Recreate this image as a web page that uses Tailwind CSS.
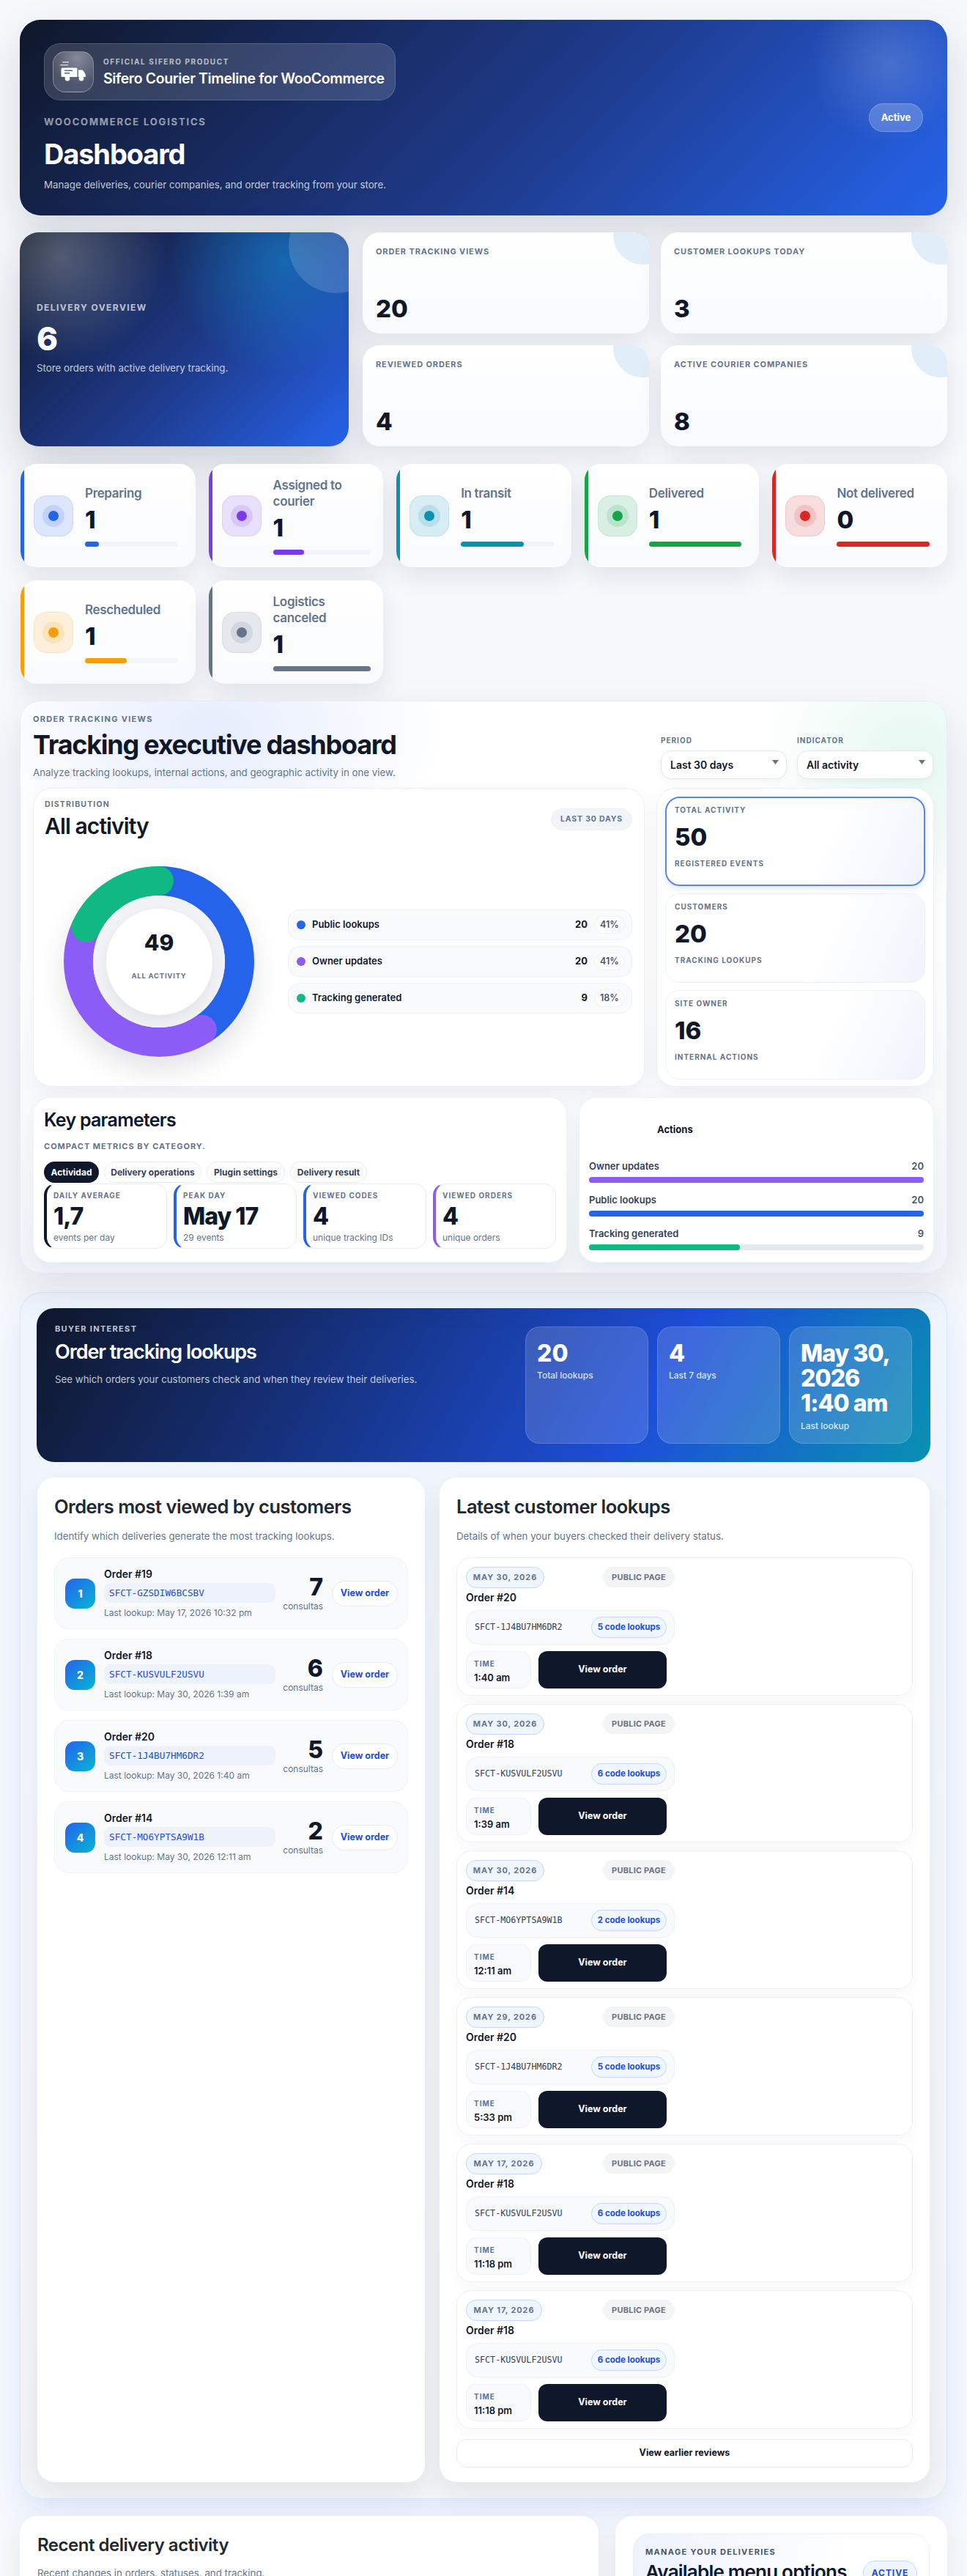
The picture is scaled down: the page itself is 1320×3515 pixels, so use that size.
<!DOCTYPE html>
<html lang="en">
<head>
<meta charset="UTF-8">
<meta name="viewport" content="width=device-width, initial-scale=1.0">
<title>Sifero Courier Timeline - Dashboard</title>
<script src="https://cdn.jsdelivr.net/npm/@tailwindcss/browser@4"></script>
</head>
<body class="h-[3515px] overflow-hidden bg-[#f6f8fc] font-['Inter',sans-serif] text-[#0f172a]">
<div class="px-[27px] pt-[27px]">

  <!-- hero -->
  <header class="relative flex h-[267px] items-center justify-between overflow-hidden rounded-[28px] bg-[linear-gradient(135deg,#0f172a_0%,#1e3a8a_55%,#2563eb_100%)] px-[33px] shadow-[0_24px_60px_rgba(15,23,42,0.14)]">
    <div class="absolute -right-[30px] -top-[50px] h-[220px] w-[220px] rounded-full bg-[radial-gradient(circle,rgba(255,255,255,0.17),rgba(255,255,255,0)_70%)]"></div>
    <div class="relative">
      <div class="flex h-[78px] w-[480px] items-center gap-[13px] rounded-[22px] border border-white/15 bg-white/15 pl-[11px]">
        <div class="flex h-[56px] w-[56px] items-center justify-center rounded-[17px] border border-white/30 bg-[radial-gradient(circle_at_60%_15%,rgba(255,255,255,0.4),rgba(255,255,255,0.12)_65%)]">
          <svg width="36" height="28" viewBox="0 0 36 28" fill="#fff"><rect x="3" y="0" width="9" height="1.6" rx=".8" opacity=".7"/><rect x="0" y="4" width="11" height="1.6" rx=".8" opacity=".7"/><path d="M3 8.5h19a1.5 1.5 0 0 1 1.500 1.500V21H3a1.500 1.500 0 0 1-1.500-1.500V10A1.500 1.500 0 0 1 3 8.500zm22 3h4.500c1 0 1.800.5 2.300 1.300l2.700 4.200c.3.400.5 1 .5 1.500V20a1 1 0 0 1-1 1H25z"/><rect x="6" y="11.500" width="11" height="1.600" fill="#5a6788"/><rect x="6" y="15" width="7" height="1.600" fill="#5a6788"/><circle cx="10" cy="23" r="3.400"/><circle cx="29" cy="23" r="3.400"/></svg>
        </div>
        <div>
          <p class="text-[10px] font-bold uppercase leading-[14px] tracking-[0.16em] text-white/65">Official Sifero product</p>
          <p class="mt-[3px] text-[19.500px] font-semibold leading-[26px] tracking-[-0.02em] text-white">Sifero Courier Timeline for WooCommerce</p>
        </div>
      </div>
      <p class="mt-[21px] text-[13px] font-bold uppercase leading-[16px] tracking-[0.14em] text-white/55">WooCommerce logistics</p>
      <h1 class="mt-[13px] text-[38px] font-bold leading-[46px] tracking-[-0.03em] text-white">Dashboard</h1>
      <p class="mt-[9px] text-[13.300px] leading-[20px] text-white/75">Manage deliveries, courier companies, and order tracking from your store.</p>
    </div>
    <span class="relative flex h-[39px] w-[74px] items-center justify-center rounded-[20px] border border-white/20 bg-white/20 text-[13px] font-bold text-white">Active</span>
  </header>

  <!-- overview -->
  <section class="mt-[23px] flex h-[292px] gap-[19px]">
    <div class="relative flex w-[449px] flex-col justify-center overflow-hidden rounded-[26px] bg-[linear-gradient(135deg,#0f172a_0%,#1e3a8a_55%,#2563eb_100%)] px-[23px] pb-[2px] shadow-[0_24px_60px_rgba(15,23,42,0.18)]">
      <div class="absolute -left-[93px] -top-[117px] h-[300px] w-[300px] rounded-full bg-[radial-gradient(circle,rgba(255,255,255,0.27),rgba(255,255,255,0)_68%)]"></div>
      <div class="absolute -right-[70px] -top-[122px] h-[320px] w-[320px] rounded-full bg-[radial-gradient(circle,rgba(14,165,233,0.42),rgba(14,165,233,0)_68%)]"></div>
      <div class="absolute -right-[48px] -top-[47px] h-[130px] w-[130px] rounded-full bg-white/15"></div>
      <p class="relative text-[12px] font-bold uppercase leading-[16px] tracking-[0.12em] text-white/70">Delivery overview</p>
      <p class="relative mt-[8px] text-[44px] font-extrabold leading-[52px] text-white">6</p>
      <p class="relative mt-[4px] text-[13.300px] leading-[20px] text-white/75">Store orders with active delivery tracking.</p>
    </div>
    <div class="grid flex-1 grid-cols-2 gap-x-4 gap-y-4">
      <div class="relative overflow-hidden rounded-[24px] bg-[linear-gradient(180deg,#ffffff,#f8fafd)] p-[18px] shadow-[0_14px_34px_rgba(15,23,42,0.09)]">
        <div class="absolute -right-[31px] -top-[36px] h-20 w-20 rounded-full bg-[#e2edfa]"></div>
        <p class="text-[11px] font-bold uppercase leading-[16px] tracking-[0.08em] text-[#64748b]">Order tracking views</p>
        <p class="mt-[50px] text-[33px] font-extrabold leading-[40px]">20</p>
      </div>
      <div class="relative overflow-hidden rounded-[24px] bg-[linear-gradient(180deg,#ffffff,#f8fafd)] p-[18px] shadow-[0_14px_34px_rgba(15,23,42,0.09)]">
        <div class="absolute -right-[31px] -top-[36px] h-20 w-20 rounded-full bg-[#e2edfa]"></div>
        <p class="text-[11px] font-bold uppercase leading-[16px] tracking-[0.08em] text-[#64748b]">Customer lookups today</p>
        <p class="mt-[50px] text-[33px] font-extrabold leading-[40px]">3</p>
      </div>
      <div class="relative overflow-hidden rounded-[24px] bg-[linear-gradient(180deg,#ffffff,#f8fafd)] p-[18px] shadow-[0_14px_34px_rgba(15,23,42,0.09)]">
        <div class="absolute -right-[31px] -top-[36px] h-20 w-20 rounded-full bg-[#e2edfa]"></div>
        <p class="text-[11px] font-bold uppercase leading-[16px] tracking-[0.08em] text-[#64748b]">Reviewed orders</p>
        <p class="mt-[50px] text-[33px] font-extrabold leading-[40px]">4</p>
      </div>
      <div class="relative overflow-hidden rounded-[24px] bg-[linear-gradient(180deg,#ffffff,#f8fafd)] p-[18px] shadow-[0_14px_34px_rgba(15,23,42,0.09)]">
        <div class="absolute -right-[31px] -top-[36px] h-20 w-20 rounded-full bg-[#e2edfa]"></div>
        <p class="text-[11px] font-bold uppercase leading-[16px] tracking-[0.08em] text-[#64748b]">Active courier companies</p>
        <p class="mt-[50px] text-[33px] font-extrabold leading-[40px]">8</p>
      </div>
    </div>
  </section>

  <!-- statuses -->
  <section class="mt-[24px] grid grid-cols-5 auto-rows-[141px] gap-x-[18px] gap-y-[18px] pl-px">
    <div class="relative flex items-center gap-4 overflow-hidden rounded-[22px] bg-[linear-gradient(180deg,#fff,#fafbfe)] pl-[18px] pr-[24px] shadow-[0_14px_34px_rgba(15,23,42,0.09)]">
      <span class="absolute inset-y-0 left-0 w-[5px] bg-[#2563eb]"></span>
      <div class="flex h-[56px] w-[54px] shrink-0 items-center justify-center rounded-[17px] border border-[#2563eb]/10 bg-[#2563eb]/15"><div class="flex h-[30px] w-[30px] items-center justify-center rounded-full bg-[#2563eb]/15"><div class="h-[14px] w-[14px] rounded-full bg-[#2563eb]"></div></div></div>
      <div class="min-w-0 flex-1"><p class="text-[17px] font-semibold leading-[22px] tracking-[-0.02em] text-[#64748b]">Preparing</p><p class="mt-[6px] text-[33px] font-extrabold leading-[38px]">1</p><div class="mt-[11px] h-[7px] rounded-full bg-[#f1f5f9]"><div class="h-full w-[15%] rounded-full bg-[#2563eb]"></div></div></div>
    </div>
    <div class="relative flex items-center gap-4 overflow-hidden rounded-[22px] bg-[linear-gradient(180deg,#fff,#fafbfe)] pl-[18px] pr-[17px] shadow-[0_14px_34px_rgba(15,23,42,0.09)]">
      <span class="absolute inset-y-0 left-0 w-[5px] bg-[#7c3aed]"></span>
      <div class="flex h-[56px] w-[54px] shrink-0 items-center justify-center rounded-[17px] border border-[#7c3aed]/10 bg-[#7c3aed]/15"><div class="flex h-[30px] w-[30px] items-center justify-center rounded-full bg-[#7c3aed]/15"><div class="h-[14px] w-[14px] rounded-full bg-[#7c3aed]"></div></div></div>
      <div class="min-w-0 flex-1"><p class="text-[17px] font-semibold leading-[22px] tracking-[-0.02em] text-[#64748b]">Assigned to courier</p><p class="mt-[6px] text-[33px] font-extrabold leading-[38px]">1</p><div class="mt-[11px] h-[7px] rounded-full bg-[#f1f5f9]"><div class="h-full w-[32%] rounded-full bg-[#7c3aed]"></div></div></div>
    </div>
    <div class="relative flex items-center gap-4 overflow-hidden rounded-[22px] bg-[linear-gradient(180deg,#fff,#fafbfe)] pl-[18px] pr-[24px] shadow-[0_14px_34px_rgba(15,23,42,0.09)]">
      <span class="absolute inset-y-0 left-0 w-[5px] bg-[#0891b2]"></span>
      <div class="flex h-[56px] w-[54px] shrink-0 items-center justify-center rounded-[17px] border border-[#0891b2]/10 bg-[#0891b2]/15"><div class="flex h-[30px] w-[30px] items-center justify-center rounded-full bg-[#0891b2]/15"><div class="h-[14px] w-[14px] rounded-full bg-[#0891b2]"></div></div></div>
      <div class="min-w-0 flex-1"><p class="text-[17px] font-semibold leading-[22px] tracking-[-0.02em] text-[#64748b]">In transit</p><p class="mt-[6px] text-[33px] font-extrabold leading-[38px]">1</p><div class="mt-[11px] h-[7px] rounded-full bg-[#f1f5f9]"><div class="h-full w-[68%] rounded-full bg-[#0891b2]"></div></div></div>
    </div>
    <div class="relative flex items-center gap-4 overflow-hidden rounded-[22px] bg-[linear-gradient(180deg,#fff,#fafbfe)] pl-[18px] pr-[24px] shadow-[0_14px_34px_rgba(15,23,42,0.09)]">
      <span class="absolute inset-y-0 left-0 w-[5px] bg-[#16a34a]"></span>
      <div class="flex h-[56px] w-[54px] shrink-0 items-center justify-center rounded-[17px] border border-[#16a34a]/10 bg-[#16a34a]/15"><div class="flex h-[30px] w-[30px] items-center justify-center rounded-full bg-[#16a34a]/15"><div class="h-[14px] w-[14px] rounded-full bg-[#16a34a]"></div></div></div>
      <div class="min-w-0 flex-1"><p class="text-[17px] font-semibold leading-[22px] tracking-[-0.02em] text-[#64748b]">Delivered</p><p class="mt-[6px] text-[33px] font-extrabold leading-[38px]">1</p><div class="mt-[11px] h-[7px] rounded-full bg-[#16a34a]"></div></div>
    </div>
    <div class="relative flex items-center gap-4 overflow-hidden rounded-[22px] bg-[linear-gradient(180deg,#fff,#fafbfe)] pl-[18px] pr-[24px] shadow-[0_14px_34px_rgba(15,23,42,0.09)]">
      <span class="absolute inset-y-0 left-0 w-[5px] bg-[#dc2626]"></span>
      <div class="flex h-[56px] w-[54px] shrink-0 items-center justify-center rounded-[17px] border border-[#dc2626]/10 bg-[#dc2626]/15"><div class="flex h-[30px] w-[30px] items-center justify-center rounded-full bg-[#dc2626]/15"><div class="h-[14px] w-[14px] rounded-full bg-[#dc2626]"></div></div></div>
      <div class="min-w-0 flex-1"><p class="text-[17px] font-semibold leading-[22px] tracking-[-0.02em] text-[#64748b]">Not delivered</p><p class="mt-[6px] text-[33px] font-extrabold leading-[38px]">0</p><div class="mt-[11px] h-[7px] rounded-full bg-[#dc2626]"></div></div>
    </div>
    <div class="relative flex items-center gap-4 overflow-hidden rounded-[22px] bg-[linear-gradient(180deg,#fff,#fafbfe)] pl-[18px] pr-[24px] shadow-[0_14px_34px_rgba(15,23,42,0.09)]">
      <span class="absolute inset-y-0 left-0 w-[5px] bg-[#f59e0b]"></span>
      <div class="flex h-[56px] w-[54px] shrink-0 items-center justify-center rounded-[17px] border border-[#f59e0b]/10 bg-[#f59e0b]/15"><div class="flex h-[30px] w-[30px] items-center justify-center rounded-full bg-[#f59e0b]/15"><div class="h-[14px] w-[14px] rounded-full bg-[#f59e0b]"></div></div></div>
      <div class="min-w-0 flex-1"><p class="text-[17px] font-semibold leading-[22px] tracking-[-0.02em] text-[#64748b]">Rescheduled</p><p class="mt-[6px] text-[33px] font-extrabold leading-[38px]">1</p><div class="mt-[11px] h-[7px] rounded-full bg-[#f1f5f9]"><div class="h-full w-[45%] rounded-full bg-[#f59e0b]"></div></div></div>
    </div>
    <div class="relative flex items-center gap-4 overflow-hidden rounded-[22px] bg-[linear-gradient(180deg,#fff,#fafbfe)] pl-[18px] pr-[17px] shadow-[0_14px_34px_rgba(15,23,42,0.09)]">
      <span class="absolute inset-y-0 left-0 w-[5px] bg-[#64748b]"></span>
      <div class="flex h-[56px] w-[54px] shrink-0 items-center justify-center rounded-[17px] border border-[#64748b]/10 bg-[#64748b]/15"><div class="flex h-[30px] w-[30px] items-center justify-center rounded-full bg-[#64748b]/15"><div class="h-[14px] w-[14px] rounded-full bg-[#64748b]"></div></div></div>
      <div class="min-w-0 flex-1"><p class="text-[17px] font-semibold leading-[22px] tracking-[-0.02em] text-[#64748b]">Logistics canceled</p><p class="mt-[6px] text-[33px] font-extrabold leading-[38px]">1</p><div class="mt-[11px] h-[7px] rounded-full bg-[#64748b]"></div></div>
    </div>
  </section>

  <!-- tracking executive dashboard -->
  <section class="relative mt-[23px] h-[781px] overflow-hidden rounded-[28px] border border-[#e6ecf5] bg-[linear-gradient(180deg,#ffffff_0%,#ffffff_45%,#f1f4f9_100%)] px-[17px] shadow-[0_24px_60px_rgba(15,23,42,0.10)]">
    <div class="absolute -left-[60px] -top-[160px] h-[400px] w-[640px] rounded-full bg-[radial-gradient(closest-side,rgba(59,110,235,0.13),rgba(59,110,235,0))]"></div>
    <div class="absolute -right-[160px] -top-[120px] h-[400px] w-[420px] rounded-full bg-[radial-gradient(closest-side,rgba(16,185,129,0.11),rgba(16,185,129,0))]"></div>
    <div class="relative flex h-[118px] justify-between">
      <div class="pt-[16px]">
        <p class="text-[11px] font-bold uppercase leading-[16px] tracking-[0.12em] text-[#64748b]">Order tracking views</p>
        <h2 class="mt-[5px] text-[36px] font-bold leading-[44px] tracking-[-0.035em]">Tracking executive dashboard</h2>
        <p class="mt-[5px] text-[13.300px] leading-[22px] text-[#64748b]">Analyze tracking lookups, internal actions, and geographic activity in one view.</p>
      </div>
      <div class="mr-px flex gap-[14px] pt-[46px]">
        <div class="w-[172px]">
          <p class="text-[10px] font-bold uppercase leading-[14px] tracking-[0.1em] text-[#64748b]">Period</p>
          <div class="mt-[7px] flex h-[39px] items-start justify-between rounded-[14px] border border-[#e2e8f0] bg-white pl-[12px] pr-[10px] pt-[9px] text-[14px] font-semibold leading-[20px] shadow-[0_4px_10px_rgba(15,23,42,0.04)]">Last 30 days<svg class="mt-[3px]" width="9" height="6" viewBox="0 0 9 6" fill="#64748b"><path d="M0 0h9L4.500 6z"/></svg></div>
        </div>
        <div class="w-[186px]">
          <p class="text-[10px] font-bold uppercase leading-[14px] tracking-[0.1em] text-[#64748b]">Indicator</p>
          <div class="mt-[7px] flex h-[39px] items-start justify-between rounded-[14px] border border-[#e2e8f0] bg-white pl-[12px] pr-[10px] pt-[9px] text-[14px] font-semibold leading-[20px] shadow-[0_4px_10px_rgba(15,23,42,0.04)]">All activity<svg class="mt-[3px]" width="9" height="6" viewBox="0 0 9 6" fill="#64748b"><path d="M0 0h9L4.500 6z"/></svg></div>
        </div>
      </div>
    </div>

    <div class="relative grid grid-cols-[835px_1fr] gap-4">
      <div class="relative h-[408px] rounded-[26px] border border-[#edf1f7] bg-white px-[15px] shadow-[0_12px_30px_rgba(15,23,42,0.05)]">
        <div class="flex items-start justify-between pr-[1px]">
          <div class="pt-[14px]">
            <p class="text-[10.500px] font-bold uppercase leading-[16px] tracking-[0.11em] text-[#64748b]">Distribution</p>
            <h3 class="mt-[2px] text-[30px] font-semibold leading-[38px] tracking-[-0.03em]">All activity</h3>
          </div>
          <span class="mt-[27px] flex h-[30px] w-[111px] items-center justify-center rounded-full border border-[#eef2f7] bg-[#f1f5f9] text-[10.500px] font-bold uppercase tracking-[0.08em] text-[#64748b]">Last 30 days</span>
        </div>
        <div class="mt-[36px] flex items-center">
          <div class="relative ml-[26px] h-[260px] w-[260px] shrink-0 rounded-full shadow-[0_18px_36px_rgba(15,23,42,0.12)]">
            <svg class="h-full w-full -rotate-90" viewBox="0 0 260 260" fill="none">
              <circle cx="130" cy="130" r="110" stroke="#2563eb" stroke-width="40" stroke-linecap="round" pathLength="100" stroke-dasharray="41 59"/>
              <circle cx="130" cy="130" r="110" stroke="#8b5cf6" stroke-width="40" stroke-linecap="round" pathLength="100" stroke-dasharray="41 59" stroke-dashoffset="-41"/>
              <circle cx="130" cy="130" r="110" stroke="#10b981" stroke-width="40" stroke-linecap="round" pathLength="100" stroke-dasharray="18 82" stroke-dashoffset="-82"/>
            </svg>
            <div class="absolute left-[40px] top-[40px] flex h-[180px] w-[180px] items-center justify-center rounded-full bg-[#f1f2f5]">
              <div class="flex h-[145px] w-[145px] flex-col items-center rounded-full bg-white pt-[28px] shadow-[0_8px_18px_rgba(15,23,42,0.06)]">
                <p class="text-[30px] font-extrabold leading-[36px]">49</p>
                <p class="mt-[21px] text-[9.500px] font-bold uppercase leading-[14px] tracking-[0.08em] text-[#64748b]">All activity</p>
              </div>
            </div>
          </div>
          <div class="ml-[46px] flex flex-1 flex-col gap-2 pr-[1px]">
            <div class="flex h-[42px] items-center rounded-[16px] border border-[#eef2f7] bg-[#f8fafc] pl-[11px] pr-[10px] text-[13px] font-semibold"><span class="mr-[9px] h-[12px] w-[12px] rounded-full bg-[#2563eb]"></span><span class="flex-1">Public lookups</span><span class="font-bold">20</span><span class="ml-[10px] flex h-[24px] w-[40px] items-center justify-center rounded-full border border-[#eef2f7] bg-white text-[12.500px] text-[#475569]">41%</span></div>
            <div class="flex h-[42px] items-center rounded-[16px] border border-[#eef2f7] bg-[#f8fafc] pl-[11px] pr-[10px] text-[13px] font-semibold"><span class="mr-[9px] h-[12px] w-[12px] rounded-full bg-[#8b5cf6]"></span><span class="flex-1">Owner updates</span><span class="font-bold">20</span><span class="ml-[10px] flex h-[24px] w-[40px] items-center justify-center rounded-full border border-[#eef2f7] bg-white text-[12.500px] text-[#475569]">41%</span></div>
            <div class="flex h-[42px] items-center rounded-[16px] border border-[#eef2f7] bg-[#f8fafc] pl-[11px] pr-[10px] text-[13px] font-semibold"><span class="mr-[9px] h-[12px] w-[12px] rounded-full bg-[#10b981]"></span><span class="flex-1">Tracking generated</span><span class="font-bold">9</span><span class="ml-[10px] flex h-[24px] w-[40px] items-center justify-center rounded-full border border-[#eef2f7] bg-white text-[12.500px] text-[#475569]">18%</span></div>
          </div>
        </div>
      </div>

      <div class="flex h-[408px] flex-col gap-[10px] rounded-[26px] border border-[#edf1f7] bg-white px-[11px] pt-[11px] shadow-[0_12px_30px_rgba(15,23,42,0.05)]">
        <div class="h-[122px] rounded-[20px] border-2 border-[#5b86e8] bg-[linear-gradient(115deg,#ffffff_60%,#f0f3fc_100%)] px-[11px] pt-[8px] shadow-[0_4px_10px_rgba(37,99,235,0.14)]">
          <p class="text-[10px] font-bold uppercase leading-[16px] tracking-[0.1em] text-[#64748b]">Total activity</p>
          <p class="mt-[10px] text-[33px] font-extrabold leading-[38px]">50</p>
          <p class="mt-[9px] text-[10px] font-bold uppercase leading-[16px] tracking-[0.1em] text-[#64748b]">Registered events</p>
        </div>
        <div class="h-[122px] rounded-[20px] border border-[#edf1f7] bg-[linear-gradient(115deg,#ffffff_60%,#f0f3fc_100%)] px-[12px] pt-[9px]">
          <p class="text-[10px] font-bold uppercase leading-[16px] tracking-[0.1em] text-[#64748b]">Customers</p>
          <p class="mt-[10px] text-[33px] font-extrabold leading-[38px]">20</p>
          <p class="mt-[9px] text-[10px] font-bold uppercase leading-[16px] tracking-[0.1em] text-[#64748b]">Tracking lookups</p>
        </div>
        <div class="h-[122px] rounded-[20px] border border-[#edf1f7] bg-[linear-gradient(115deg,#ffffff_60%,#f0f3fc_100%)] px-[12px] pt-[9px]">
          <p class="text-[10px] font-bold uppercase leading-[16px] tracking-[0.1em] text-[#64748b]">Site owner</p>
          <p class="mt-[10px] text-[33px] font-extrabold leading-[38px]">16</p>
          <p class="mt-[9px] text-[10px] font-bold uppercase leading-[16px] tracking-[0.1em] text-[#64748b]">Internal actions</p>
        </div>
      </div>
    </div>

    <div class="relative mt-[14px] grid grid-cols-[729px_1fr] gap-4">
      <div class="h-[226px] rounded-[24px] border border-[#f0f3f8] bg-white px-[14px] shadow-[0_12px_30px_rgba(15,23,42,0.05)]">
        <h3 class="mt-[13px] text-[25px] font-semibold leading-[34px] tracking-[-0.03em]">Key parameters</h3>
        <p class="mt-[12px] text-[11px] font-bold uppercase leading-[14px] tracking-[0.09em] text-[#64748b]">Compact metrics by category.</p>
        <div class="mt-[14px] flex gap-[7px] text-[12px] font-bold leading-[16px]">
          <span class="flex h-[29px] w-[75px] items-center justify-center rounded-full bg-[#0f172a] text-white">Actividad</span>
          <span class="flex h-[29px] w-[133px] items-center justify-center rounded-full border border-[#e6ecf5] text-[#334155]">Delivery operations</span>
          <span class="flex h-[29px] w-[107px] items-center justify-center rounded-full border border-[#e6ecf5] text-[#334155]">Plugin settings</span>
          <span class="flex h-[29px] w-[105px] items-center justify-center rounded-full border border-[#e6ecf5] text-[#334155]">Delivery result</span>
        </div>
        <div class="mt-px grid grid-cols-4 gap-[9px]">
          <div class="h-[89px] rounded-[16px] border border-l-4 border-[#e8edf5] border-l-[#0f172a] pl-[9px] pt-[7px]"><p class="text-[10px] font-bold uppercase leading-[16px] tracking-[0.1em] text-[#64748b]">Daily average</p><p class="mt-[2px] text-[32px] font-extrabold leading-[38px] tracking-[-0.03em]">1,7</p><p class="mt-[1px] text-[12px] leading-[18px] text-[#64748b]">events per day</p></div>
          <div class="h-[89px] rounded-[16px] border border-l-4 border-[#e8edf5] border-l-[#2563eb] pl-[9px] pt-[7px]"><p class="text-[10px] font-bold uppercase leading-[16px] tracking-[0.1em] text-[#64748b]">Peak day</p><p class="mt-[2px] text-[32px] font-extrabold leading-[38px] tracking-[-0.03em]">May 17</p><p class="mt-[1px] text-[12px] leading-[18px] text-[#64748b]">29 events</p></div>
          <div class="h-[89px] rounded-[16px] border border-l-4 border-[#e8edf5] border-l-[#2563eb] pl-[9px] pt-[7px]"><p class="text-[10px] font-bold uppercase leading-[16px] tracking-[0.1em] text-[#64748b]">Viewed codes</p><p class="mt-[2px] text-[32px] font-extrabold leading-[38px] tracking-[-0.03em]">4</p><p class="mt-[1px] text-[12px] leading-[18px] text-[#64748b]">unique tracking IDs</p></div>
          <div class="h-[89px] rounded-[16px] border border-l-4 border-[#e8edf5] border-l-[#8b5cf6] pl-[9px] pt-[7px]"><p class="text-[10px] font-bold uppercase leading-[16px] tracking-[0.1em] text-[#64748b]">Viewed orders</p><p class="mt-[2px] text-[32px] font-extrabold leading-[38px] tracking-[-0.03em]">4</p><p class="mt-[1px] text-[12px] leading-[18px] text-[#64748b]">unique orders</p></div>
        </div>
      </div>
      <div class="h-[226px] rounded-[24px] border border-[#f0f3f8] bg-white px-[13px] shadow-[0_12px_30px_rgba(15,23,42,0.05)]">
        <h4 class="ml-[93px] mt-[33px] text-[13px] font-bold leading-[20px]">Actions</h4>
        <div class="mt-[30px] flex justify-between text-[13px] font-semibold leading-[20px] text-[#334155]"><span>Owner updates</span><span class="text-[#475569]">20</span></div>
        <div class="mt-[5px] h-[8px] rounded-full bg-[#8b5cf6]"></div>
        <div class="mt-[13px] flex justify-between text-[13px] font-semibold leading-[20px] text-[#334155]"><span>Public lookups</span><span class="text-[#475569]">20</span></div>
        <div class="mt-[5px] h-[8px] rounded-full bg-[#2563eb]"></div>
        <div class="mt-[13px] flex justify-between text-[13px] font-semibold leading-[20px] text-[#334155]"><span>Tracking generated</span><span class="text-[#475569]">9</span></div>
        <div class="mt-[5px] h-[8px] rounded-full bg-[#e2e8f0]"><div class="h-full w-[45%] rounded-full bg-[#10b981]"></div></div>
      </div>
    </div>
  </section>

  <!-- buyer interest -->
  <section class="mt-[26px] h-[1647px] rounded-[30px] border border-[#d8e7fb] bg-[linear-gradient(180deg,#eff5fe_0%,#f3f6fb_40%,#f3f4f7_100%)] px-[22px] pt-[21px] shadow-[0_20px_44px_rgba(37,99,235,0.11)]">
    <div class="flex h-[210px] items-center justify-between rounded-[24px] bg-[linear-gradient(120deg,#0f172a_0%,#1d4ed8_68%,#0891b2_100%)] pl-[25px] pr-[25px]">
      <div class="-mt-[84px]">
        <p class="text-[11px] font-bold uppercase leading-[16px] tracking-[0.12em] text-white/75">Buyer interest</p>
        <h3 class="mt-[6px] text-[27px] font-semibold leading-[36px] tracking-[-0.04em] text-white">Order tracking lookups</h3>
        <p class="mt-[9px] text-[13.300px] leading-[20px] text-white/75">See which orders your customers check and when they review their deliveries.</p>
      </div>
      <div class="flex gap-3">
        <div class="h-[160px] w-[168px] rounded-[20px] border border-white/15 bg-white/15 px-[15px] pt-[19px]"><p class="text-[32px] font-extrabold leading-[34px] text-white">20</p><p class="mt-[4px] text-[12px] font-medium leading-[18px] text-white/80">Total lookups</p></div>
        <div class="h-[160px] w-[168px] rounded-[20px] border border-white/15 bg-white/15 px-[15px] pt-[19px]"><p class="text-[32px] font-extrabold leading-[34px] text-white">4</p><p class="mt-[4px] text-[12px] font-medium leading-[18px] text-white/80">Last 7 days</p></div>
        <div class="h-[160px] w-[168px] rounded-[20px] border border-white/15 bg-white/15 px-[15px] pt-[19px]"><p class="text-[32px] font-extrabold leading-[34px] tracking-[-0.03em] text-white">May 30, 2026 1:40 am</p><p class="mt-[5px] text-[12px] font-medium leading-[18px] text-white/80">Last lookup</p></div>
      </div>
    </div>

    <div class="mx-px mt-[21px] grid h-[1371px] grid-cols-[529px_1fr] gap-5">
      <!-- most viewed -->
      <div class="rounded-[24px] bg-white px-[23px] pt-[24px] shadow-[0_14px_34px_rgba(15,23,42,0.07)]">
        <h3 class="text-[25.500px] font-semibold leading-[32px] tracking-[-0.02em] text-[#1f2933]">Orders most viewed by customers</h3>
        <p class="mt-[14px] text-[13.300px] leading-[20px] text-[#64748b]">Identify which deliveries generate the most tracking lookups.</p>
        <div class="mt-[19px] flex flex-col gap-[13px]">
          <div class="flex h-[98px] items-center rounded-[20px] border border-[#f0f3f8] bg-[#f8fafc] pl-[14px] pr-[13px]">
            <span class="flex h-[41px] w-[41px] shrink-0 items-center justify-center rounded-[13px] bg-[linear-gradient(135deg,#2563eb,#06b6d4)] text-[14px] font-extrabold text-white">1</span>
            <div class="ml-[12px] w-[234px]"><p class="text-[14px] font-semibold leading-[20px]">Order #19</p><p class="mt-[2px] flex h-[27px] items-center rounded-[9px] bg-[#eef2fd] px-[7px] font-['DejaVu_Sans_Mono',monospace] text-[12.700px] text-[#1d4ed8]">SFCT-GZSDIW6BCSBV</p><p class="mt-[5px] text-[12px] leading-[18px] text-[#64748b]">Last lookup: May 17, 2026 10:32 pm</p></div>
            <div class="ml-auto text-right"><p class="text-[32px] font-extrabold leading-[36px]">7</p><p class="text-[12px] leading-[16px] text-[#64748b]">consultas</p></div>
            <span class="ml-[12px] flex h-[35px] w-[90px] shrink-0 items-center justify-center rounded-full border border-[#e6ecf5] bg-white text-[12.500px] font-bold text-[#1d4ed8]">View order</span>
          </div>
          <div class="flex h-[98px] items-center rounded-[20px] border border-[#f0f3f8] bg-[#f8fafc] pl-[14px] pr-[13px]">
            <span class="flex h-[41px] w-[41px] shrink-0 items-center justify-center rounded-[13px] bg-[linear-gradient(135deg,#2563eb,#06b6d4)] text-[14px] font-extrabold text-white">2</span>
            <div class="ml-[12px] w-[234px]"><p class="text-[14px] font-semibold leading-[20px]">Order #18</p><p class="mt-[2px] flex h-[27px] items-center rounded-[9px] bg-[#eef2fd] px-[7px] font-['DejaVu_Sans_Mono',monospace] text-[12.700px] text-[#1d4ed8]">SFCT-KUSVULF2USVU</p><p class="mt-[5px] text-[12px] leading-[18px] text-[#64748b]">Last lookup: May 30, 2026 1:39 am</p></div>
            <div class="ml-auto text-right"><p class="text-[32px] font-extrabold leading-[36px]">6</p><p class="text-[12px] leading-[16px] text-[#64748b]">consultas</p></div>
            <span class="ml-[12px] flex h-[35px] w-[90px] shrink-0 items-center justify-center rounded-full border border-[#e6ecf5] bg-white text-[12.500px] font-bold text-[#1d4ed8]">View order</span>
          </div>
          <div class="flex h-[98px] items-center rounded-[20px] border border-[#f0f3f8] bg-[#f8fafc] pl-[14px] pr-[13px]">
            <span class="flex h-[41px] w-[41px] shrink-0 items-center justify-center rounded-[13px] bg-[linear-gradient(135deg,#2563eb,#06b6d4)] text-[14px] font-extrabold text-white">3</span>
            <div class="ml-[12px] w-[234px]"><p class="text-[14px] font-semibold leading-[20px]">Order #20</p><p class="mt-[2px] flex h-[27px] items-center rounded-[9px] bg-[#eef2fd] px-[7px] font-['DejaVu_Sans_Mono',monospace] text-[12.700px] text-[#1d4ed8]">SFCT-1J4BU7HM6DR2</p><p class="mt-[5px] text-[12px] leading-[18px] text-[#64748b]">Last lookup: May 30, 2026 1:40 am</p></div>
            <div class="ml-auto text-right"><p class="text-[32px] font-extrabold leading-[36px]">5</p><p class="text-[12px] leading-[16px] text-[#64748b]">consultas</p></div>
            <span class="ml-[12px] flex h-[35px] w-[90px] shrink-0 items-center justify-center rounded-full border border-[#e6ecf5] bg-white text-[12.500px] font-bold text-[#1d4ed8]">View order</span>
          </div>
          <div class="flex h-[98px] items-center rounded-[20px] border border-[#f0f3f8] bg-[#f8fafc] pl-[14px] pr-[13px]">
            <span class="flex h-[41px] w-[41px] shrink-0 items-center justify-center rounded-[13px] bg-[linear-gradient(135deg,#2563eb,#06b6d4)] text-[14px] font-extrabold text-white">4</span>
            <div class="ml-[12px] w-[234px]"><p class="text-[14px] font-semibold leading-[20px]">Order #14</p><p class="mt-[2px] flex h-[27px] items-center rounded-[9px] bg-[#eef2fd] px-[7px] font-['DejaVu_Sans_Mono',monospace] text-[12.700px] text-[#1d4ed8]">SFCT-MO6YPTSA9W1B</p><p class="mt-[5px] text-[12px] leading-[18px] text-[#64748b]">Last lookup: May 30, 2026 12:11 am</p></div>
            <div class="ml-auto text-right"><p class="text-[32px] font-extrabold leading-[36px]">2</p><p class="text-[12px] leading-[16px] text-[#64748b]">consultas</p></div>
            <span class="ml-[12px] flex h-[35px] w-[90px] shrink-0 items-center justify-center rounded-full border border-[#e6ecf5] bg-white text-[12.500px] font-bold text-[#1d4ed8]">View order</span>
          </div>
        </div>
      </div>

      <!-- latest lookups -->
      <div class="rounded-[24px] bg-white px-[23px] pt-[24px] shadow-[0_14px_34px_rgba(15,23,42,0.07)]">
        <h3 class="text-[25.500px] font-semibold leading-[32px] tracking-[-0.02em] text-[#1f2933]">Latest customer lookups</h3>
        <p class="mt-[14px] text-[13.300px] leading-[20px] text-[#64748b]">Details of when your buyers checked their delivery status.</p>
        <div class="mt-[19px] flex flex-col gap-[11px]">
          <div class="h-[189px] rounded-[20px] border border-[#edf1f7] bg-white p-[12px] shadow-[0_8px_18px_rgba(15,23,42,0.03)]"><div class="w-[285px]">
            <div class="flex justify-between"><span class="flex h-[29px] w-[107px] items-center justify-center rounded-full border border-[#bfdbfe] bg-[#eff6ff] text-[11px] font-bold uppercase tracking-[0.08em] text-[#64748b]">May 30, 2026</span><span class="flex h-[28px] w-[98px] items-center justify-center rounded-full bg-[#f3f4f6] text-[11px] font-bold uppercase tracking-[0.02em] text-[#6b7280]">Public page</span></div>
            <p class="mt-[3px] text-[14px] font-semibold leading-[20px]">Order #20</p>
            <div class="mt-[7px] flex h-[47px] items-center justify-between rounded-[16px] border border-[#edf1f7] bg-[#f8fafc] pl-[11px] pr-[10px]"><span class="font-['DejaVu_Sans_Mono',monospace] text-[11.700px] text-[#334155]">SFCT-1J4BU7HM6DR2</span><span class="flex h-[29px] w-[103px] items-center justify-center rounded-full border border-[#bfdbfe] bg-[#eff6ff] text-[11.500px] font-bold text-[#1d4ed8]">5 code lookups</span></div>
            <div class="mt-[9px] flex gap-[10px]"><div class="h-[51px] w-[89px] rounded-[14px] border border-[#edf1f7] bg-[#f8fafc] pl-[10px] pt-[9px]"><p class="text-[10px] font-bold uppercase leading-[14px] tracking-[0.1em] text-[#64748b]">Time</p><p class="mt-[3px] text-[13px] font-semibold leading-[18px]">1:40 am</p></div><span class="flex h-[51px] w-[175px] items-center justify-center rounded-[12px] bg-[#0f172a] text-[12.500px] font-bold text-white">View order</span></div>
          </div></div>
          <div class="h-[189px] rounded-[20px] border border-[#edf1f7] bg-white p-[12px] shadow-[0_8px_18px_rgba(15,23,42,0.03)]"><div class="w-[285px]">
            <div class="flex justify-between"><span class="flex h-[29px] w-[107px] items-center justify-center rounded-full border border-[#bfdbfe] bg-[#eff6ff] text-[11px] font-bold uppercase tracking-[0.08em] text-[#64748b]">May 30, 2026</span><span class="flex h-[28px] w-[98px] items-center justify-center rounded-full bg-[#f3f4f6] text-[11px] font-bold uppercase tracking-[0.02em] text-[#6b7280]">Public page</span></div>
            <p class="mt-[3px] text-[14px] font-semibold leading-[20px]">Order #18</p>
            <div class="mt-[7px] flex h-[47px] items-center justify-between rounded-[16px] border border-[#edf1f7] bg-[#f8fafc] pl-[11px] pr-[10px]"><span class="font-['DejaVu_Sans_Mono',monospace] text-[11.700px] text-[#334155]">SFCT-KUSVULF2USVU</span><span class="flex h-[29px] w-[103px] items-center justify-center rounded-full border border-[#bfdbfe] bg-[#eff6ff] text-[11.500px] font-bold text-[#1d4ed8]">6 code lookups</span></div>
            <div class="mt-[9px] flex gap-[10px]"><div class="h-[51px] w-[89px] rounded-[14px] border border-[#edf1f7] bg-[#f8fafc] pl-[10px] pt-[9px]"><p class="text-[10px] font-bold uppercase leading-[14px] tracking-[0.1em] text-[#64748b]">Time</p><p class="mt-[3px] text-[13px] font-semibold leading-[18px]">1:39 am</p></div><span class="flex h-[51px] w-[175px] items-center justify-center rounded-[12px] bg-[#0f172a] text-[12.500px] font-bold text-white">View order</span></div>
          </div></div>
          <div class="h-[189px] rounded-[20px] border border-[#edf1f7] bg-white p-[12px] shadow-[0_8px_18px_rgba(15,23,42,0.03)]"><div class="w-[285px]">
            <div class="flex justify-between"><span class="flex h-[29px] w-[107px] items-center justify-center rounded-full border border-[#bfdbfe] bg-[#eff6ff] text-[11px] font-bold uppercase tracking-[0.08em] text-[#64748b]">May 30, 2026</span><span class="flex h-[28px] w-[98px] items-center justify-center rounded-full bg-[#f3f4f6] text-[11px] font-bold uppercase tracking-[0.02em] text-[#6b7280]">Public page</span></div>
            <p class="mt-[3px] text-[14px] font-semibold leading-[20px]">Order #14</p>
            <div class="mt-[7px] flex h-[47px] items-center justify-between rounded-[16px] border border-[#edf1f7] bg-[#f8fafc] pl-[11px] pr-[10px]"><span class="font-['DejaVu_Sans_Mono',monospace] text-[11.700px] text-[#334155]">SFCT-MO6YPTSA9W1B</span><span class="flex h-[29px] w-[103px] items-center justify-center rounded-full border border-[#bfdbfe] bg-[#eff6ff] text-[11.500px] font-bold text-[#1d4ed8]">2 code lookups</span></div>
            <div class="mt-[9px] flex gap-[10px]"><div class="h-[51px] w-[89px] rounded-[14px] border border-[#edf1f7] bg-[#f8fafc] pl-[10px] pt-[9px]"><p class="text-[10px] font-bold uppercase leading-[14px] tracking-[0.1em] text-[#64748b]">Time</p><p class="mt-[3px] text-[13px] font-semibold leading-[18px]">12:11 am</p></div><span class="flex h-[51px] w-[175px] items-center justify-center rounded-[12px] bg-[#0f172a] text-[12.500px] font-bold text-white">View order</span></div>
          </div></div>
          <div class="h-[189px] rounded-[20px] border border-[#edf1f7] bg-white p-[12px] shadow-[0_8px_18px_rgba(15,23,42,0.03)]"><div class="w-[285px]">
            <div class="flex justify-between"><span class="flex h-[29px] w-[107px] items-center justify-center rounded-full border border-[#bfdbfe] bg-[#eff6ff] text-[11px] font-bold uppercase tracking-[0.08em] text-[#64748b]">May 29, 2026</span><span class="flex h-[28px] w-[98px] items-center justify-center rounded-full bg-[#f3f4f6] text-[11px] font-bold uppercase tracking-[0.02em] text-[#6b7280]">Public page</span></div>
            <p class="mt-[3px] text-[14px] font-semibold leading-[20px]">Order #20</p>
            <div class="mt-[7px] flex h-[47px] items-center justify-between rounded-[16px] border border-[#edf1f7] bg-[#f8fafc] pl-[11px] pr-[10px]"><span class="font-['DejaVu_Sans_Mono',monospace] text-[11.700px] text-[#334155]">SFCT-1J4BU7HM6DR2</span><span class="flex h-[29px] w-[103px] items-center justify-center rounded-full border border-[#bfdbfe] bg-[#eff6ff] text-[11.500px] font-bold text-[#1d4ed8]">5 code lookups</span></div>
            <div class="mt-[9px] flex gap-[10px]"><div class="h-[51px] w-[89px] rounded-[14px] border border-[#edf1f7] bg-[#f8fafc] pl-[10px] pt-[9px]"><p class="text-[10px] font-bold uppercase leading-[14px] tracking-[0.1em] text-[#64748b]">Time</p><p class="mt-[3px] text-[13px] font-semibold leading-[18px]">5:33 pm</p></div><span class="flex h-[51px] w-[175px] items-center justify-center rounded-[12px] bg-[#0f172a] text-[12.500px] font-bold text-white">View order</span></div>
          </div></div>
          <div class="h-[189px] rounded-[20px] border border-[#edf1f7] bg-white p-[12px] shadow-[0_8px_18px_rgba(15,23,42,0.03)]"><div class="w-[285px]">
            <div class="flex justify-between"><span class="flex h-[29px] w-[104px] items-center justify-center rounded-full border border-[#bfdbfe] bg-[#eff6ff] text-[11px] font-bold uppercase tracking-[0.08em] text-[#64748b]">May 17, 2026</span><span class="flex h-[28px] w-[98px] items-center justify-center rounded-full bg-[#f3f4f6] text-[11px] font-bold uppercase tracking-[0.02em] text-[#6b7280]">Public page</span></div>
            <p class="mt-[3px] text-[14px] font-semibold leading-[20px]">Order #18</p>
            <div class="mt-[7px] flex h-[47px] items-center justify-between rounded-[16px] border border-[#edf1f7] bg-[#f8fafc] pl-[11px] pr-[10px]"><span class="font-['DejaVu_Sans_Mono',monospace] text-[11.700px] text-[#334155]">SFCT-KUSVULF2USVU</span><span class="flex h-[29px] w-[103px] items-center justify-center rounded-full border border-[#bfdbfe] bg-[#eff6ff] text-[11.500px] font-bold text-[#1d4ed8]">6 code lookups</span></div>
            <div class="mt-[9px] flex gap-[10px]"><div class="h-[51px] w-[89px] rounded-[14px] border border-[#edf1f7] bg-[#f8fafc] pl-[10px] pt-[9px]"><p class="text-[10px] font-bold uppercase leading-[14px] tracking-[0.1em] text-[#64748b]">Time</p><p class="mt-[3px] text-[13px] font-semibold leading-[18px]">11:18 pm</p></div><span class="flex h-[51px] w-[175px] items-center justify-center rounded-[12px] bg-[#0f172a] text-[12.500px] font-bold text-white">View order</span></div>
          </div></div>
          <div class="h-[189px] rounded-[20px] border border-[#edf1f7] bg-white p-[12px] shadow-[0_8px_18px_rgba(15,23,42,0.03)]"><div class="w-[285px]">
            <div class="flex justify-between"><span class="flex h-[29px] w-[104px] items-center justify-center rounded-full border border-[#bfdbfe] bg-[#eff6ff] text-[11px] font-bold uppercase tracking-[0.08em] text-[#64748b]">May 17, 2026</span><span class="flex h-[28px] w-[98px] items-center justify-center rounded-full bg-[#f3f4f6] text-[11px] font-bold uppercase tracking-[0.02em] text-[#6b7280]">Public page</span></div>
            <p class="mt-[3px] text-[14px] font-semibold leading-[20px]">Order #18</p>
            <div class="mt-[7px] flex h-[47px] items-center justify-between rounded-[16px] border border-[#edf1f7] bg-[#f8fafc] pl-[11px] pr-[10px]"><span class="font-['DejaVu_Sans_Mono',monospace] text-[11.700px] text-[#334155]">SFCT-KUSVULF2USVU</span><span class="flex h-[29px] w-[103px] items-center justify-center rounded-full border border-[#bfdbfe] bg-[#eff6ff] text-[11.500px] font-bold text-[#1d4ed8]">6 code lookups</span></div>
            <div class="mt-[9px] flex gap-[10px]"><div class="h-[51px] w-[89px] rounded-[14px] border border-[#edf1f7] bg-[#f8fafc] pl-[10px] pt-[9px]"><p class="text-[10px] font-bold uppercase leading-[14px] tracking-[0.1em] text-[#64748b]">Time</p><p class="mt-[3px] text-[13px] font-semibold leading-[18px]">11:18 pm</p></div><span class="flex h-[51px] w-[175px] items-center justify-center rounded-[12px] bg-[#0f172a] text-[12.500px] font-bold text-white">View order</span></div>
          </div></div>
          <span class="mt-[3px] flex h-[39px] items-center justify-center rounded-[14px] border border-[#e6ecf5] bg-white text-[12.500px] font-bold">View earlier reviews</span>
        </div>
      </div>
    </div>
  </section>

  <!-- bottom row -->
  <section class="mt-[23px] grid h-[200px] grid-cols-[790px_1fr] gap-[23px]">
    <div class="rounded-t-[24px] bg-white px-[24px] pt-[24px] shadow-[0_14px_34px_rgba(15,23,42,0.08)]">
      <h3 class="text-[24px] font-semibold leading-[32px] tracking-[-0.02em] text-[#1f2933]">Recent delivery activity</h3>
      <p class="mt-[12px] text-[13.300px] leading-[20px] text-[#64748b]">Recent changes in orders, statuses, and tracking.</p>
    </div>
    <div class="rounded-t-[24px] bg-white px-[24px] pt-[24px] shadow-[0_14px_34px_rgba(15,23,42,0.08)]">
      <div class="h-[170px] rounded-[22px] border border-[#edf1f7] bg-[linear-gradient(100deg,#eef2fc,#ffffff_70%)] px-[16px] pt-[16px]">
        <p class="text-[11px] font-bold uppercase leading-[16px] tracking-[0.12em] text-[#475569]">Manage your deliveries</p>
        <div class="mt-[3px] flex items-start justify-between"><h3 class="text-[26px] font-semibold leading-[34px] tracking-[-0.03em]">Available menu options</h3><span class="mt-[1px] flex h-[34px] w-[74px] items-center justify-center rounded-full border border-[#bfdbfe] bg-[#eff6ff] text-[12px] font-bold uppercase tracking-[0.08em] text-[#1d4ed8]">Active</span></div>
      </div>
    </div>
  </section>
</div>
</body>
</html>
